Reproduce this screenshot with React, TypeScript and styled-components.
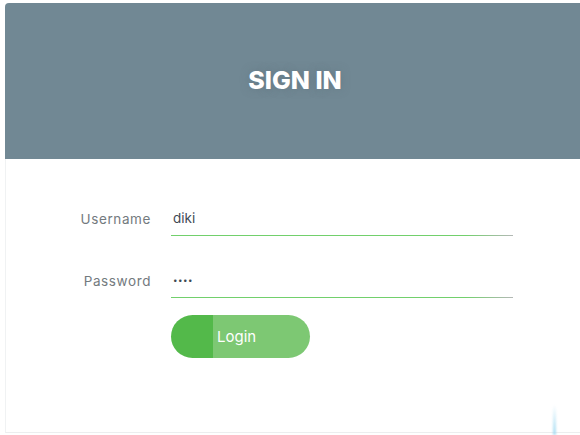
import React from "react";
import styled, { createGlobalStyle } from "styled-components";

const GlobalStyle = createGlobalStyle`
  html, body {
    margin: 0;
    padding: 0;
    background: #ffffff;
    font-family: Inter, "Open Sans", sans-serif;
    overflow: hidden;
  }
`;

const Page = styled.div`
  width: 580px;
  height: 435px;
  padding: 3px 0 0 5px;
  box-sizing: border-box;
  position: relative;
  overflow: hidden;
`;

const Card = styled.div`
  width: 590px;
  height: 430px;
  border-radius: 4px 4px 0 0;
  border-left: 1px solid #f0f2f3;
  border-bottom: 1px solid #eceeef;
  box-sizing: border-box;
  display: flex;
  flex-direction: column;
`;

const Header = styled.header`
  height: 156px;
  background: #718894;
  border-radius: 4px 4px 0 0;
  margin-left: -1px;
  display: flex;
  align-items: center;
  justify-content: center;
  padding-right: 10px;
`;

const Title = styled.h1`
  margin: 0 0 2px;
  color: #ffffff;
  font-size: 25px;
  font-weight: 800;
  letter-spacing: 0;
  text-shadow: 0 0 8px rgba(90, 110, 120, 0.5);
`;

const Form = styled.form`
  display: flex;
  flex-direction: column;
  padding: 42px 0 0 0;
`;

const Row = styled.div`
  display: grid;
  grid-template-columns: 145px 342px;
  column-gap: 20px;
  align-items: center;
  margin-bottom: 27px;
`;

const Label = styled.label`
  text-align: right;
  font-size: 13.5px;
  color: #737a7e;
  letter-spacing: 0.6px;
`;

/* underline: green, fading to grey at the right end */
const FieldBox = styled.div`
  height: 35px;
  display: flex;
  background-image: linear-gradient(to right, #72d06c 0%, #72d06c 86%, #b4b8b6 100%);
  background-repeat: no-repeat;
  background-position: left bottom;
  background-size: 100% 1px;
`;

const Field = styled.input<{ $secret?: boolean }>`
  flex: 1;
  appearance: none;
  border: 0;
  outline: none;
  margin: 0 0 1px;
  padding: 0 2px;
  font-family: inherit;
  font-size: ${(p) => (p.$secret ? "8px" : "13.5px")};
  letter-spacing: ${(p) => (p.$secret ? "0.5px" : "0")};
  color: #3f4a55;
  background: transparent;
`;

const ButtonRow = styled.div`
  padding-left: 165px;
  margin-top: -10px;
`;

const LoginButton = styled.button`
  width: 139px;
  height: 43px;
  border: none;
  border-radius: 22px;
  background: linear-gradient(to right, #53b94a 0, #53b94a 42px, #7dc873 42px, #7dc873 100%);
  color: #ffffff;
  font-family: inherit;
  font-size: 15px;
  text-align: left;
  padding-left: 46px;
  cursor: pointer;
`;

const Glint = styled.div`
  position: absolute;
  right: 24px;
  bottom: 0;
  width: 3px;
  height: 30px;
  background: linear-gradient(to bottom, rgba(150, 215, 240, 0), #a6dcf2);
  filter: blur(1px);
`;

export default function App() {
  return (
    <>
      <GlobalStyle />
      <Page>
        <Card>
          <Header>
            <Title>SIGN IN</Title>
          </Header>
          <Form onSubmit={(e) => e.preventDefault()}>
            <Row>
              <Label htmlFor="username">Username</Label>
              <FieldBox>
                <Field id="username" type="text" defaultValue="diki" />
              </FieldBox>
            </Row>
            <Row>
              <Label htmlFor="password">Password</Label>
              <FieldBox>
                <Field id="password" type="password" defaultValue="diki" $secret />
              </FieldBox>
            </Row>
            <ButtonRow>
              <LoginButton type="submit">Login</LoginButton>
            </ButtonRow>
          </Form>
        </Card>
        <Glint />
      </Page>
    </>
  );
}
